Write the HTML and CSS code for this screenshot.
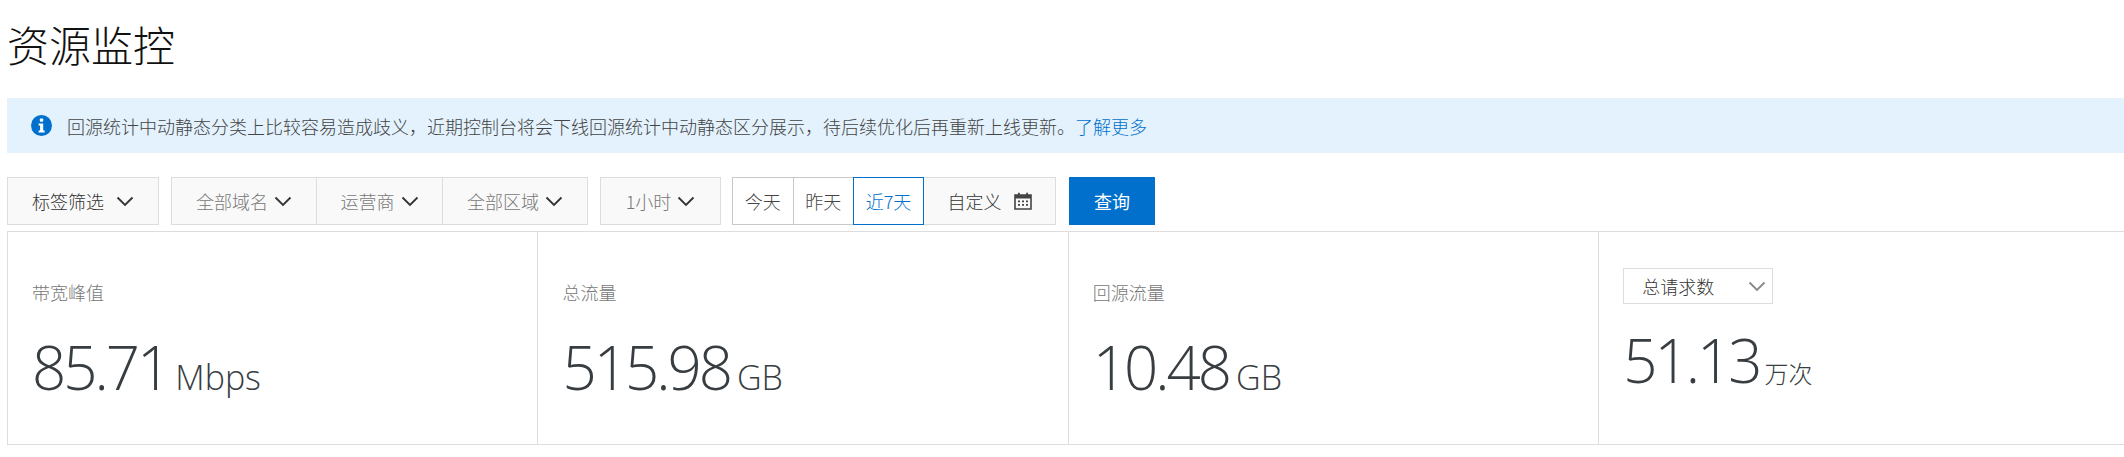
FILE: index.html
```html
<!DOCTYPE html>
<html lang="zh-CN">
<head>
    <meta charset="UTF-8">
    <title>资源监控</title>
    <link rel="stylesheet" href="styles.css">
</head>
<body>
    <div class="container">
        <h1 class="page-title">资源监控</h1>

        <!-- 提示 -->
        <div class="notice">
            <svg class="notice-icon" viewBox="0 0 21 21">
                <circle cx="10.5" cy="10.5" r="10.5" fill="#0070cc"/>
                <rect x="8.8" y="3.6" width="3.4" height="3.2" rx="1" fill="#fff"/>
                <path d="M7.6 8.6h4.6v7h1.4v2h-6v-2h1.5v-5H7.6z" fill="#fff"/>
            </svg>
            <span>回源统计中动静态分类上比较容易造成歧义，近期控制台将会下线回源统计中动静态区分展示，待后续优化后再重新上线更新。<a class="notice-link">了解更多</a></span>
        </div>

        <!-- 筛选栏 -->
        <div class="toolbar">
            <div class="select-group tag-filter">
                <div class="select-item dark">标签筛选<svg class="chevron wide" viewBox="0 0 18 11"><path d="M1.5 1.5 9 9l7.5-7.5"/></svg></div>
            </div>
            <div class="select-group domain-group">
                <div class="select-item item-domain">全部域名<svg class="chevron" viewBox="0 0 18 11"><path d="M1.5 1.5 9 9l7.5-7.5"/></svg></div>
                <div class="select-item item-isp">运营商<svg class="chevron" viewBox="0 0 18 11"><path d="M1.5 1.5 9 9l7.5-7.5"/></svg></div>
                <div class="select-item item-area">全部区域<svg class="chevron" viewBox="0 0 18 11"><path d="M1.5 1.5 9 9l7.5-7.5"/></svg></div>
            </div>
            <div class="select-group hour-group">
                <div class="select-item item-hour">1小时<svg class="chevron" viewBox="0 0 18 11"><path d="M1.5 1.5 9 9l7.5-7.5"/></svg></div>
            </div>
            <div class="range-group">
                <div class="range-item">今天</div>
                <div class="range-item">昨天</div>
                <div class="range-item active">近7天</div>
                <div class="range-custom">自定义
                    <svg class="calendar" viewBox="0 0 18 18">
                        <path d="M1 3h16v14H1z" fill="none" stroke="#444" stroke-width="1.6"/>
                        <path d="M1 3h16v3.5H1zM4 0.8h1.8v3H4zM12.2 0.8H14v3h-1.8z" fill="#444"/>
                        <path d="M4 8.5h2v1.8H4zM8 8.5h2v1.8H8zM12 8.5h2v1.8h-2zM4 12h2v1.8H4zM8 12h2v1.8H8zM12 12h2v1.8h-2z" fill="#444"/>
                    </svg>
                </div>
            </div>
            <button class="query-button">查询</button>
        </div>

        <!-- 统计卡片 -->
        <div class="stats">
            <div class="stat-card">
                <div class="stat-label">带宽峰值</div>
                <div class="stat-value">85.71<span class="stat-unit">Mbps</span></div>
            </div>
            <div class="stat-card">
                <div class="stat-label">总流量</div>
                <div class="stat-value">515.98<span class="stat-unit">GB</span></div>
            </div>
            <div class="stat-card">
                <div class="stat-label">回源流量</div>
                <div class="stat-value">10.48<span class="stat-unit">GB</span></div>
            </div>
            <div class="stat-card last">
                <div class="stat-select">总请求数<svg class="chevron gray" viewBox="0 0 18 11"><path d="M1.5 1.5 9 9l7.5-7.5"/></svg></div>
                <div class="stat-value">51.13<span class="stat-unit cjk">万次</span></div>
            </div>
        </div>
    </div>
</body>
</html>
```

FILE: styles.css
```css
* {
    margin: 0;
    padding: 0;
    box-sizing: border-box;
}

body {
    font-family: "Noto Sans CJK SC", "Open Sans", sans-serif;
    font-weight: 300;
    background: #fff;
    color: #333;
    overflow: hidden;
}

.container {
    width: 2124px;
    height: 457px;
    padding-left: 7px;
    overflow: hidden;
}

.page-title {
    height: 98px;
    padding-top: 14px;
    font-size: 42px;
    line-height: 60px;
    font-weight: 300;
    color: #111;
}

.notice {
    height: 55px;
    display: flex;
    align-items: center;
    gap: 15px;
    padding-left: 24px;
    background: #e3f2fd;
    font-size: 18px;
    color: #444;
}

.notice-icon {
    width: 21px;
    height: 21px;
    flex: none;
}

.notice-link {
    color: #0070cc;
}

.toolbar {
    display: flex;
    height: 48px;
    margin-top: 24px;
    font-size: 18px;
}

.select-group {
    display: flex;
    height: 48px;
    border: 1px solid #ddd;
    background: #f9f9f9;
}

.tag-filter {
    width: 152px;
    margin-right: 12px;
}

.domain-group {
    width: 417px;
    margin-right: 12px;
}

.hour-group {
    width: 121px;
    margin-right: 11px;
}

.select-item {
    display: flex;
    align-items: center;
    justify-content: center;
    gap: 6px;
    color: #777;
    border-right: 1px solid #ddd;
}

.select-item:last-child {
    border-right: none;
}

.select-item.dark {
    width: 100%;
    color: #333;
    gap: 12px;
}

.item-domain {
    width: 145px;
}

.item-isp {
    width: 126px;
}

.item-area {
    width: 144px;
}

.item-hour {
    width: 100%;
}

.chevron {
    width: 18px;
    height: 11px;
    flex: none;
    fill: none;
    stroke: #333;
    stroke-width: 1.8;
}

.chevron.gray {
    stroke: #888;
}

.range-group {
    display: flex;
    height: 48px;
    margin-right: 13px;
}

.range-item {
    height: 48px;
    width: 60.5px;
    display: flex;
    align-items: center;
    justify-content: center;
    border: 1px solid #c8c8c8;
    border-right: none;
    background: #fff;
    color: #444;
}

.range-item.active {
    width: 71px;
    border: 1px solid #0070cc;
    color: #0070cc;
}

.range-custom {
    width: 132px;
    display: flex;
    align-items: center;
    justify-content: center;
    gap: 12px;
    border: 1px solid #ddd;
    border-left: none;
    background: #f9f9f9;
    color: #333;
}

.calendar {
    width: 18px;
    height: 18px;
}

.query-button {
    width: 86px;
    height: 48px;
    border: none;
    background: #0070cc;
    color: #fff;
    font-family: inherit;
    font-size: 18px;
}

.stats {
    display: flex;
    width: 2130px;
    height: 214px;
    margin-top: 6px;
    border: 1px solid #ddd;
    border-right: none;
}

.stat-card {
    width: 530.4px;
    flex: none;
    padding: 45px 24px 0;
    border-right: 1px solid #ddd;
}

.stat-card.last {
    padding-top: 36px;
    border-right: none;
}

.stat-label {
    height: 30px;
    font-size: 18px;
    line-height: 30px;
    color: #777;
}

.stat-value {
    margin-top: 22px;
    font-family: "Open Sans", sans-serif;
    font-size: 60px;
    line-height: 76px;
    letter-spacing: -3px;
    color: #373d41;
}

.last .stat-value {
    margin-top: 18px;
}

.stat-unit {
    margin-left: 7px;
    font-size: 34px;
    letter-spacing: 0;
}

.stat-unit.cjk {
    margin-left: 5px;
    font-family: "Noto Sans CJK SC", sans-serif;
    font-size: 24px;
}

.stat-select {
    width: 150px;
    height: 36px;
    display: flex;
    align-items: center;
    justify-content: space-between;
    padding: 0 6px 0 18px;
    border: 1px solid #ddd;
    font-size: 18px;
    color: #333;
}
```
